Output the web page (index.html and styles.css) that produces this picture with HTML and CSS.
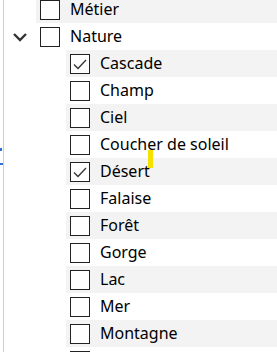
FILE: index.html
```html
<!DOCTYPE html>
<html>
<head>
<meta charset="utf-8">
<link rel="stylesheet" href="styles.css">
</head>
<body>
<div class="frame">
  <div class="tree">
    <div class="row alt"><div class="indent l0"></div><div class="item"><span class="box"></span><span class="label">Métier</span></div></div>
    <div class="row"><div class="indent l0"><svg class="chev" width="16" height="10" viewBox="0 0 16 10"><path d="M2 2 L8 8 L14 2" fill="none" stroke="#333" stroke-width="2.4"/></svg></div><div class="item"><span class="box"></span><span class="label">Nature</span></div></div>
    <div class="row alt"><div class="indent l1"></div><div class="item"><span class="box"><svg width="20" height="20" viewBox="0 0 20 20"><path d="M4 10.5 L8 14.5 L16 6" fill="none" stroke="#333" stroke-width="1.3"/></svg></span><span class="label">Cascade</span></div></div>
    <div class="row"><div class="indent l1"></div><div class="item"><span class="box"></span><span class="label">Champ</span></div></div>
    <div class="row alt"><div class="indent l1"></div><div class="item"><span class="box"></span><span class="label">Ciel</span></div></div>
    <div class="row"><div class="indent l1"></div><div class="item"><span class="box"></span><span class="label">Coucher de soleil</span></div></div>
    <div class="row alt"><div class="indent l1"></div><div class="item"><span class="box"><svg width="20" height="20" viewBox="0 0 20 20"><path d="M4 10.5 L8 14.5 L16 6" fill="none" stroke="#333" stroke-width="1.3"/></svg></span><span class="label">Désert</span></div></div>
    <div class="row"><div class="indent l1"></div><div class="item"><span class="box"></span><span class="label">Falaise</span></div></div>
    <div class="row alt"><div class="indent l1"></div><div class="item"><span class="box"></span><span class="label">Forêt</span></div></div>
    <div class="row"><div class="indent l1"></div><div class="item"><span class="box"></span><span class="label">Gorge</span></div></div>
    <div class="row alt"><div class="indent l1"></div><div class="item"><span class="box"></span><span class="label">Lac</span></div></div>
    <div class="row"><div class="indent l1"></div><div class="item"><span class="box"></span><span class="label">Mer</span></div></div>
    <div class="row alt"><div class="indent l1"></div><div class="item"><span class="box"></span><span class="label">Montagne</span></div></div>
    <div class="row"><div class="indent l1"></div><div class="item"><span class="box"></span></div></div>
  </div>
  <div class="mark-blue a"></div>
  <div class="mark-blue b"></div>
  <div class="cursor"></div>
</div>
</body>
</html>
```
FILE: styles.css
```css
html, body {
  margin: 0;
  padding: 0;
  background: #fff;
  overflow: hidden;
}
.frame {
  position: relative;
  width: 277px;
  height: 352px;
  overflow: hidden;
  padding-left: 3px;
  box-sizing: border-box;
}
.tree {
  border-left: 1px solid #cfcfcf;
  height: 400px;
  margin-top: -4px;
  font-family: "Noto Sans", "Open Sans", sans-serif;
  font-size: 16px;
  color: #000;
}
.row {
  display: flex;
  height: 27px;
}
.indent {
  flex: none;
  display: flex;
  align-items: center;
  justify-content: center;
}
.indent.l0 { width: 32px; }
.indent.l1 { width: 62px; }
.chev { display: block; margin-top: 1px; }
.item {
  flex: 1;
  display: flex;
  align-items: center;
  padding-left: 4px;
  gap: 10px;
}
.row.alt .item { background: #f3f3f3; }
.box {
  width: 20px;
  height: 20px;
  box-sizing: border-box;
  border: 1px solid #222;
  background: #fff;
  flex: none;
  position: relative;
}
.box svg {
  position: absolute;
  left: -1px;
  top: -1px;
}
.label {
  white-space: nowrap;
  line-height: 27px;
}
.mark-blue {
  position: absolute;
  background: #2f6fd6;
}
.mark-blue.a { left: 0; top: 148px; width: 2px; height: 3px; }
.mark-blue.b { left: 0; top: 163px; width: 3px; height: 2px; }
.cursor {
  position: absolute;
  left: 148px;
  top: 150px;
  width: 5px;
  height: 18px;
  background: #f5e000;
}
```
